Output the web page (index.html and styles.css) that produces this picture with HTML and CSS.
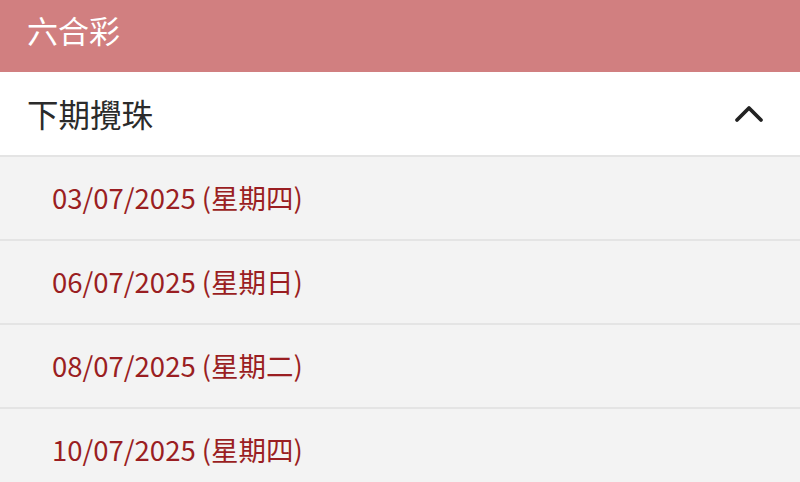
FILE: index.html
```html
<!DOCTYPE html>
<html lang="zh-Hant">
<head>
<meta charset="utf-8">
<link rel="stylesheet" href="styles.css">
</head>
<body>
<header class="topbar">六合彩</header>
<section class="panel">
  <div class="panel-head">
    <span class="panel-title">下期攪珠</span>
    <svg class="chev" width="30" height="20" viewBox="0 0 30 20"><path d="M3 16 L15 4 L27 16" fill="none" stroke="#222" stroke-width="3.8" stroke-linecap="round" stroke-linejoin="round"/></svg>
  </div>
  <ul class="dates">
    <li>03/07/2025 (星期四)</li>
    <li>06/07/2025 (星期日)</li>
    <li>08/07/2025 (星期二)</li>
    <li>10/07/2025 (星期四)</li>
  </ul>
</section>
</body>
</html>
```
FILE: styles.css
```css
* { box-sizing: border-box; }
html, body { margin: 0; padding: 0; }
body {
  font-family: "Noto Sans CJK TC", "Noto Sans", sans-serif;
  background: #f3f3f3;
  overflow: hidden;
}
.topbar {
  height: 72px;
  background: #d17f80;
  color: #fff;
  font-size: 31px;
  line-height: 1;
  padding: 14px 0 0 27px;
}
.panel-head {
  height: 85px;
  background: #fff;
  border-bottom: 2px solid #e4e4e4;
  display: flex;
  align-items: center;
  justify-content: space-between;
  padding: 0 36px 2px 27px;
}
.panel-title {
  font-size: 31.5px;
  color: #2b2b2b;
}
.chev { display: block; margin-top: 2px; }
.dates { list-style: none; margin: 0; padding: 0; }
.dates li {
  height: 84px;
  border-bottom: 2px solid #e4e4e4;
  display: flex;
  align-items: center;
  padding: 0 0 2px 52px;
  font-size: 27.5px;
  color: #9a1e22;
}
```
